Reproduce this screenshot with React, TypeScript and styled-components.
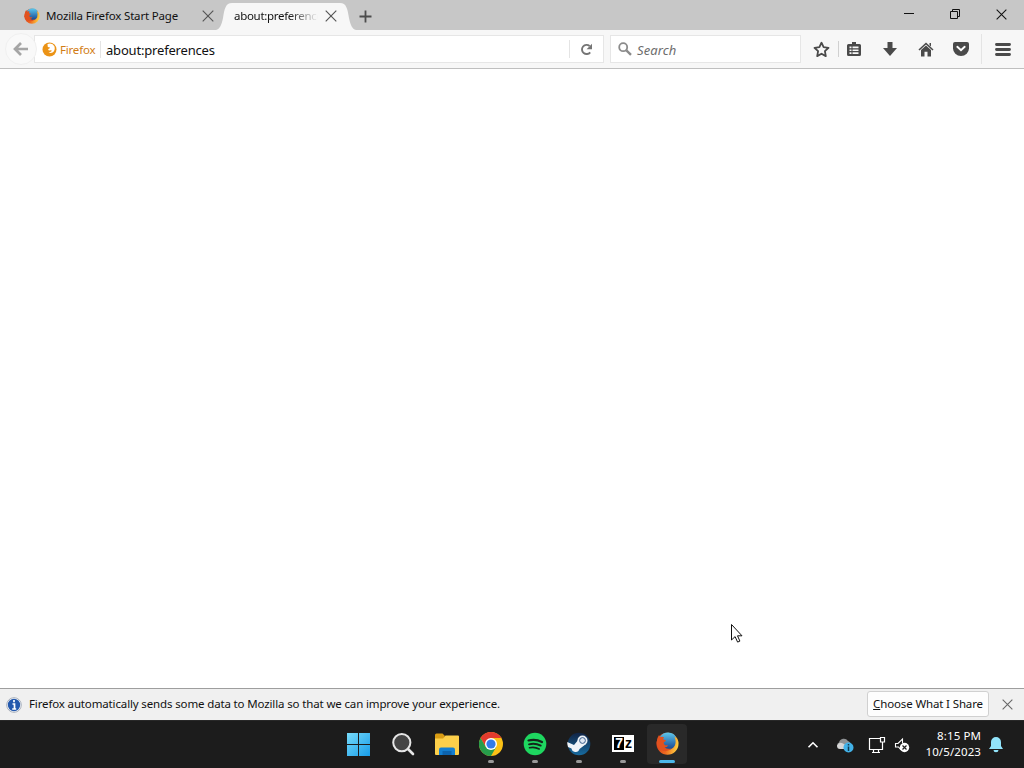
import React from "react";
import styled, { createGlobalStyle } from "styled-components";

const App = () => {
	return (
		<Desktop>
			<GlobalStyle />
			<TitleBar>
				<InactiveTab>
					<FirefoxIcon size={16} />
					<TabTitle>Mozilla Firefox Start Page</TabTitle>
					<CrossIcon size={12} color="#555" />
				</InactiveTab>
				<ActiveTab>
					<TabEdge />
					<ActiveTabBody>
						<FadedTitle>about:preferences</FadedTitle>
						<CrossIcon size={12} color="#555" />
					</ActiveTabBody>
					<TabEdge flipped />
				</ActiveTab>
				<NewTab>
					<svg width="13" height="13" viewBox="0 0 13 13">
						<path d="M6.5 .5v12M.5 6.5h12" stroke="#4c4c4c" strokeWidth="1.8" />
					</svg>
				</NewTab>
				<WindowControls>
					<WindowButton>
						<svg width="10" height="10" viewBox="0 0 10 10">
							<path d="M0 4.5h10" stroke="#111" />
						</svg>
					</WindowButton>
					<WindowButton>
						<svg width="10" height="10" viewBox="0 0 10 10" fill="none" stroke="#111">
							<path d="M.5 2.5h7v7h-7zM2.5 2.5v-2h7v7h-2" />
						</svg>
					</WindowButton>
					<WindowButton>
						<CrossIcon size={11} color="#111" />
					</WindowButton>
				</WindowControls>
			</TitleBar>

			<NavBar>
				<BackButton>
					<svg width="16" height="14" viewBox="0 0 16 14">
						<path d="M8 1 2 7l6 6M2.5 7H15" fill="none" stroke="#a5a5a5" strokeWidth="2.7" />
					</svg>
				</BackButton>
				<UrlBar>
					<Identity>
						<IdentityIcon />
						<IdentityLabel>Firefox</IdentityLabel>
					</Identity>
					<UrlText>about:preferences</UrlText>
					<Reload>
						<svg width="13" height="13" viewBox="0 0 13 13">
							<path d="M10.2 9.3A4.6 4.6 0 1 1 9.6 3" fill="none" stroke="#757575" strokeWidth="1.9" />
							<path d="M12 .7v5.5H6.6z" fill="#757575" />
						</svg>
					</Reload>
				</UrlBar>
				<SearchBox>
					<svg width="14" height="14" viewBox="0 0 14 14" fill="none" stroke="#8b8b8b">
						<circle cx="5.2" cy="5.2" r="4" strokeWidth="1.8" />
						<path d="m8.4 8.4 4.6 4.4" strokeWidth="2.4" />
					</svg>
					<Placeholder>Search</Placeholder>
				</SearchBox>
				<ToolButton $width={33}>
					<svg width="17" height="17" viewBox="0 0 17 17">
						<path
							d="m8.5 1.7 2.1 4.5 4.9.6-3.6 3.4.9 4.9-4.3-2.4-4.3 2.4.9-4.9-3.6-3.4 4.9-.6z"
							fill="none"
							stroke="#4a4a4a"
							strokeWidth="1.8"
							strokeLinejoin="round"
						/>
					</svg>
				</ToolButton>
				<ToolDivider $height={16} />
				<ToolButton $width={29}>
					<svg width="14" height="16" viewBox="0 0 14 16">
						<path d="M5 1h4v2h3.500Q14 3 14 4.500v9q0 1.500-1.500 1.500h-11Q0 15 0 13.500v-9Q0 3 1.500 3H5z" fill="#4a4a4a" />
						<path
							d="M2.500 5.500h2v1.700h-2zM5.500 5.500h6v1.700h-6zM2.500 8.400h2v1.700h-2zM5.500 8.400h6v1.700h-6zM2.500 11.300h2V13h-2zM5.500 11.300h6V13h-6z"
							fill="#f7f7f7"
						/>
					</svg>
				</ToolButton>
				<ToolButton $width={43}>
					<svg width="14" height="14" viewBox="0 0 14 14">
						<path d="M4.500 0h5v6H14l-7 8-7-8h4.500z" fill="#4a4a4a" />
					</svg>
				</ToolButton>
				<ToolButton $width={29}>
					<svg width="16" height="15" viewBox="0 0 16 15">
						<path d="M1 8 8 1.500 15 8" fill="none" stroke="#4a4a4a" strokeWidth="1.600" />
						<path d="M11.500 1H13v3.500l-1.500-1.300zM3 8l5-4.600L13 8v6.500H9.500V9.700h-3v4.800H3z" fill="#4a4a4a" />
					</svg>
				</ToolButton>
				<ToolButton $width={41}>
					<svg width="16" height="14" viewBox="0 0 16 14">
						<path d="M2 0h12q2 0 2 2v4.200a8 7.800 0 0 1-16 0V2q0-2 2-2z" fill="#4a4a4a" />
						<path d="m4.300 4.800 3.700 3.500 3.700-3.500" fill="none" stroke="#fff" strokeWidth="1.900" strokeLinecap="round" />
					</svg>
				</ToolButton>
				<ToolDivider $height={30} $faint />
				<ToolButton $width={42}>
					<svg width="16" height="13" viewBox="0 0 16 13">
						<path d="M1.500 1.500h13M1.500 6.500h13M1.500 11.500h13" stroke="#4a4a4a" strokeWidth="2.900" strokeLinecap="round" />
					</svg>
				</ToolButton>
			</NavBar>

			<Page />

			<Notification>
				<svg width="16" height="16" viewBox="0 0 16 16">
					<circle cx="8" cy="8" r="7.300" fill="#fff" stroke="#a5adb9" />
					<circle cx="8" cy="8" r="6.200" fill="#2459ad" />
					<path d="M8 3v2.200M6.500 7h2v4.600M6.200 12h4" stroke="#fff" strokeWidth="1.700" fill="none" />
				</svg>
				<NotificationText>
					Firefox automatically sends some data to Mozilla so that we can improve your experience.
				</NotificationText>
				<ShareButton>
					<span>
						<u>C</u>hoose What I Share
					</span>
				</ShareButton>
				<CrossIcon size={11} color="#666" />
			</Notification>

			<Taskbar>
				<Apps>
					<TaskSlot>
						<WindowsIcon />
					</TaskSlot>
					<TaskSlot>
						<svg width="24" height="24" viewBox="0 0 24 24">
							<circle cx="10.800" cy="10.600" r="8.600" fill="#444" stroke="#e5e5e5" strokeWidth="2" />
							<path d="m17 17 5 5" stroke="#e5e5e5" strokeWidth="2.600" strokeLinecap="round" />
						</svg>
					</TaskSlot>
					<TaskSlot>
						<FolderIcon />
					</TaskSlot>
					<TaskSlot $running>
						<ChromeIcon />
					</TaskSlot>
					<TaskSlot $running>
						<svg width="24" height="24" viewBox="0 0 24 24">
							<circle cx="12" cy="12" r="11.300" fill="#1ed760" />
							<g fill="none" stroke="#14251a" strokeLinecap="round">
								<path d="M5.500 8.500q7-2 13.500 1.500" strokeWidth="2.200" />
								<path d="M6 12.300q6-1.700 11.700 1.300" strokeWidth="1.900" />
								<path d="M6.500 15.800q5-1.300 9.700 1.200" strokeWidth="1.600" />
							</g>
						</svg>
					</TaskSlot>
					<TaskSlot $running>
						<SteamIcon />
					</TaskSlot>
					<TaskSlot $running>
						<SevenZip>
							<b>7</b>
							<span>z</span>
						</SevenZip>
					</TaskSlot>
					<TaskSlot $running $active>
						<FirefoxIcon size={23} />
					</TaskSlot>
				</Apps>
				<Tray>
					<TraySlot $width={30}>
						<svg width="12" height="8" viewBox="0 0 12 8">
							<path d="m1.500 6.300 4.500-4.500 4.500 4.500" fill="none" stroke="#fff" strokeWidth="1.600" />
						</svg>
					</TraySlot>
					<TraySlot $width={34}>
						<svg width="18" height="16" viewBox="0 0 18 16">
							<path d="M3 11a3 3 0 0 1 0-5.500A5 5 0 0 1 12 4q3 1 2.500 5l-5 3z" fill="#8f9294" />
							<path d="M1 8.500q2-4 6-2l4 2.500-1 3H4Q1 12 1 8.500z" fill="#d5d5d5" />
							<circle cx="12.500" cy="10.500" r="5" fill="#42b2e8" />
							<path d="M12.500 7v1.500M12.500 9.600V14" stroke="#143c50" strokeWidth="1.500" />
						</svg>
					</TraySlot>
					<TraySlot $width={30}>
						<svg width="18" height="18" viewBox="0 0 18 18" fill="none" stroke="#fff" strokeWidth="1.200">
							<path d="M12 2.500H1.500v11h13V8M5.500 13.500v3M10.500 13.500v3M4 16.500h8M12.500 1.500h4v4.500h-4zM14.500 6v3" />
						</svg>
					</TraySlot>
					<TraySlot $width={20}>
						<svg width="16" height="16" viewBox="0 0 16 16">
							<path d="M7 13 4.500 10H1.500V6.500h2.500L8.500 2v4" fill="none" stroke="#fff" strokeWidth="1.100" />
							<circle cx="10.500" cy="10.500" r="4.700" fill="#fff" />
							<path d="m8.500 8.500 4 4m0-4-4 4" stroke="#222" strokeWidth="1.200" />
						</svg>
					</TraySlot>
					<Clock>
						<span>8:15 PM</span>
						<span>10/5/2023</span>
					</Clock>
					<TraySlot $width={30}>
						<svg width="14" height="16" viewBox="0 0 14 16">
							<path d="M7 0a5 5 0 0 1 5 5v4l2 3H0l2-3V5a5 5 0 0 1 5-5zM4.500 13h5a2.500 2.300 0 0 1-5 0z" fill="#92e4fb" />
						</svg>
					</TraySlot>
				</Tray>
			</Taskbar>

			<Cursor width="14" height="21" viewBox="0 0 14 21">
				<path d="M1.500 1.500v15.500l3.600-3.400 2.500 5.500 2.300-1-2.400-5.300H12z" fill="#fff" stroke="#111" />
			</Cursor>
		</Desktop>
	);
};

export default App;

interface IconProps {
	size: number;
	color?: string;
}

const CrossIcon = ({ size, color }: IconProps) => (
	<svg width={size} height={size} viewBox="0 0 12 12">
		<path d="m.7.7 10.600 10.600m0-10.600L.7 11.300" stroke={color} strokeWidth="1.150" />
	</svg>
);

const TabEdge = ({ flipped }: { flipped?: boolean }) => (
	<svg width="16" height="27" viewBox="0 0 16 27" transform={flipped ? "scale(-1 1)" : undefined}>
		<path d="M0 27C4 26 5.500 22 7 15 8.500 6 9.500 0 16 0v27z" fill="#f7f7f7" />
	</svg>
);

const FirefoxIcon = ({ size }: IconProps) => (
	<svg width={size} height={size} viewBox="0 0 24 24">
		<defs>
			<linearGradient id="ff-globe" x1="0" y1="0" x2="0" y2="1">
				<stop offset="0" stopColor="#5cc8ee" />
				<stop offset="1" stopColor="#16418d" />
			</linearGradient>
			<linearGradient id="ff-tail" x1="0" y1=".3" x2="1" y2=".5">
				<stop offset="0" stopColor="#d83c1c" />
				<stop offset=".5" stopColor="#ee6a20" />
				<stop offset="1" stopColor="#ffd040" />
			</linearGradient>
		</defs>
		<circle cx="12" cy="12.300" r="11.500" fill="url(#ff-tail)" />
		<path d="M4 5Q7.500 .3 13 .5q5.500 .3 8 5-1 .2-1.800-.6 2.300 5 .6 9-2.300 4.600-7.500 4.600-6 0-8-6z" fill="url(#ff-globe)" />
		<path
			d="M3 3.500q1 .3 1.700 1.700 2-.7 3.700.2-1.200 1.200-.7 2.500l2.700.8q-.3 1.300-2.300 2.100-.4 2.300 1.500 3 1.800-.3 3.200.4-1.300 2.100-3.800 2.100 3.500 2.200 7.300.6-4 4.500-10 2.500Q.5 16.500.7 11 1 6 3 3.500z"
			fill="#e2521f"
		/>
	</svg>
);

const IdentityIcon = () => (
	<svg width="15" height="15" viewBox="0 0 15 15">
		<circle cx="7.500" cy="7.500" r="7" fill="#eb9316" />
		<path d="M5.500 2q5-1.500 7 2.500 1 4-2 6-2 1-4-.3 2.500.2 3.500-1.400Q8.600 8 7.600 8.600 6 8.500 6.200 7q1.600-.3 1.800-1.500L5.800 5z" fill="#fff" />
	</svg>
);

const WindowsIcon = () => (
	<svg width="24" height="24" viewBox="0 0 24 24">
		<defs>
			<linearGradient id="win" x1="0" y1="0" x2="24" y2="24" gradientUnits="userSpaceOnUse">
				<stop offset="0" stopColor="#79dcfa" />
				<stop offset="1" stopColor="#159be9" />
			</linearGradient>
		</defs>
		<path d="M0 1h11v11H0zM12 1h11v11H12zM0 13h11v11H0zM12 13h11v11H12z" fill="url(#win)" />
	</svg>
);

const FolderIcon = () => (
	<svg width="26" height="24" viewBox="0 0 26 24">
		<path d="M1 3q0-1.500 1.500-1.500h6L11 4l-2 4H1z" fill="#d99c13" />
		<path d="M1 6.500h8L11.500 3.500H24q1 0 1 1V22q0 1-1 1H2q-1 0-1-1z" fill="#fccf4a" />
		<path d="M5 23v-5.500q0-2 2-2h12q2 0 2 2V23z" fill="#137ed0" />
		<path d="M8.500 19h9v4h-9z" fill="#0c63ae" />
	</svg>
);

const ChromeIcon = () => (
	<svg width="24" height="24" viewBox="0 0 24 24">
		<circle cx="12" cy="12" r="12" fill="#fbc116" />
		<path d="M1.600 6A12 12 0 0 1 22.400 6H12L6.800 15z" fill="#e33b2e" />
		<path d="M1.600 6a12 12 0 0 0 10.400 18l5.200-9H6.800z" fill="#269c4b" />
		<circle cx="12" cy="12" r="6" fill="#fff" />
		<circle cx="12" cy="12" r="4.600" fill="#327bea" />
	</svg>
);

const SteamIcon = () => (
	<svg width="24" height="24" viewBox="0 0 24 24">
		<defs>
			<linearGradient id="steam" x1="0" y1="0" x2="0" y2="1">
				<stop offset="0" stopColor="#112344" />
				<stop offset="1" stopColor="#176b9f" />
			</linearGradient>
		</defs>
		<circle cx="12" cy="12" r="11.300" fill="url(#steam)" />
		<path d="m.3 10 6.700 3 5-6 7 5-6.500 5q-1 3.500-4.500 3-3-.5-3.500-3.500L1 14.900q-1-2.400-.7-4.900z" fill="#eef3f8" />
		<circle cx="15.500" cy="8.500" r="5" fill="#eef3f8" />
		<circle cx="15.500" cy="8.500" r="2.900" fill="#dfe9f5" stroke="#3b5f8c" strokeWidth="1" />
	</svg>
);

const GlobalStyle = createGlobalStyle`
	body {
		margin: 0;
		overflow: hidden;
	}
	* {
		box-sizing: border-box;
	}
	svg {
		display: block;
		flex-shrink: 0;
	}
`;

const Desktop = styled.div`
	position: relative;
	display: flex;
	flex-direction: column;
	width: 1024px;
	height: 768px;
	background: #fff;
	color: #111;
	font-family: "Noto Sans", "Open Sans", sans-serif;
	font-size: 11.5px;
	letter-spacing: -0.14px;
	white-space: nowrap;
`;

const TitleBar = styled.div`
	display: flex;
	height: 30px;
	background: #c7c7c7;
`;

const InactiveTab = styled.div`
	display: flex;
	align-items: center;
	width: 216px;
	padding: 2px 0 0 24px;
`;

const TabTitle = styled.div`
	width: 156px;
	margin-left: 6px;
	padding-bottom: 2px;
	letter-spacing: -0.17px;
`;

const ActiveTab = styled.div`
	display: flex;
	height: 27px;
	margin-top: 3px;
`;

const ActiveTabBody = styled.div`
	display: flex;
	align-items: center;
	justify-content: space-between;
	width: 108px;
	padding: 0 3px 1px 2px;
	background: #f7f7f7;
`;

const FadedTitle = styled.div`
	width: 84px;
	padding-bottom: 1px;
	overflow: hidden;
	letter-spacing: -0.3px;
	mask-image: linear-gradient(to right, #000 65%, transparent);
`;

const NewTab = styled.div`
	display: flex;
	align-items: center;
	padding: 2px 0 0 3px;
`;

const WindowControls = styled.div`
	display: flex;
	margin-left: auto;
`;

const WindowButton = styled.div`
	display: flex;
	align-items: center;
	justify-content: center;
	width: 46px;
	padding-bottom: 2px;
`;

const NavBar = styled.div`
	display: flex;
	align-items: center;
	height: 39px;
	background: #f7f7f7;
	border-bottom: 1px solid #bfbfbf;
`;

const BackButton = styled.div`
	z-index: 1;
	display: flex;
	flex-shrink: 0;
	align-items: center;
	justify-content: center;
	width: 32px;
	height: 32px;
	margin: 0 -3px 0 5px;
	border: 1px solid #f0f0f0;
	border-radius: 50%;
	background: #f9f9f9;
`;

const UrlBar = styled.div`
	display: flex;
	flex-shrink: 0;
	align-items: center;
	width: 570px;
	height: 28px;
	padding-left: 7px;
	border: 1px solid #e6e6e6;
	background: #fff;
`;

const Identity = styled.div`
	display: flex;
	align-items: center;
	gap: 3px;
	width: 59px;
	height: 17px;
	border-right: 1px solid #e4e4e4;
`;

const IdentityLabel = styled.span`
	color: #d27d14;
	letter-spacing: -0.2px;
`;

const UrlText = styled.div`
	flex: 1;
	padding: 2px 0 0 5px;
	font-size: 13px;
	letter-spacing: -0.18px;
`;

const Reload = styled.div`
	display: flex;
	align-items: center;
	justify-content: center;
	width: 34px;
	height: 18px;
	border-left: 1px solid #e4e4e4;
`;

const SearchBox = styled.div`
	display: flex;
	flex-shrink: 0;
	align-items: center;
	gap: 5px;
	width: 191px;
	height: 28px;
	margin: 0 4px 0 6px;
	padding-left: 7px;
	border: 1px solid #e6e6e6;
	background: #fff;
`;

const Placeholder = styled.div`
	padding-top: 2px;
	color: #6d6d6d;
	font-size: 13px;
	font-style: italic;
	letter-spacing: 0.1px;
`;

const ToolButton = styled.div<{ $width: number }>`
	display: flex;
	flex-shrink: 0;
	align-items: center;
	justify-content: center;
	width: ${(props) => props.$width}px;
`;

const ToolDivider = styled.div<{ $height: number; $faint?: boolean }>`
	flex-shrink: 0;
	width: 1px;
	height: ${(props) => props.$height}px;
	background: ${(props) => (props.$faint ? "#e4e4e4" : "#d0d0d0")};
`;

const Page = styled.div`
	flex: 1;
`;

const Notification = styled.div`
	display: flex;
	align-items: center;
	height: 32px;
	padding: 0 11px 0 6px;
	border-top: 1px solid #9e9e9e;
	background: #f0f0f0;
`;

const NotificationText = styled.div`
	flex: 1;
	margin-left: 7px;
	padding-bottom: 2px;
`;

const ShareButton = styled.div`
	display: flex;
	align-items: center;
	justify-content: center;
	width: 122px;
	height: 26px;
	margin: 0 13px 1px 0;
	padding-bottom: 1px;
	border: 1px solid #d0d0d0;
	border-radius: 3px;
	background: #fdfdfd;
`;

const Taskbar = styled.div`
	display: flex;
	height: 48px;
	padding-left: 336px;
	border-top: 1px solid #282828;
	background: #1c1c1c;
	color: #fff;
`;

const Apps = styled.div`
	display: flex;
	align-items: center;
	gap: 4px;
	padding: 0 0 1px 3px;
`;

const TaskSlot = styled.div<{ $running?: boolean; $active?: boolean }>`
	position: relative;
	display: flex;
	align-items: center;
	justify-content: center;
	width: 40px;
	height: 40px;
	padding-bottom: 1px;
	border-radius: 4px;
	background: ${(props) => (props.$active ? "#292929" : "transparent")};

	&::after {
		content: "";
		display: ${(props) => (props.$running ? "block" : "none")};
		position: absolute;
		bottom: 1px;
		width: ${(props) => (props.$active ? 16 : 6)}px;
		height: 3px;
		border-radius: 2px;
		background: ${(props) => (props.$active ? "#4cb8ea" : "#999")};
	}
`;

const SevenZip = styled.div`
	display: flex;
	align-items: flex-end;
	justify-content: center;
	width: 22px;
	height: 17px;
	padding-bottom: 2px;
	background: #fff;
	color: #000;
	font: bold 14px/13px "Liberation Sans", sans-serif;

	b {
		width: 10px;
		margin-right: 1px;
		background: #000;
		color: #fff;
		text-align: center;
	}
`;

const Tray = styled.div`
	display: flex;
	align-items: center;
	margin-left: auto;
	padding-right: 13px;
`;

const TraySlot = styled.div<{ $width: number }>`
	display: flex;
	align-items: center;
	justify-content: center;
	width: ${(props) => props.$width}px;
`;

const Clock = styled.div`
	display: flex;
	flex-direction: column;
	align-items: flex-end;
	width: 69px;
	padding-bottom: 2px;
	letter-spacing: 0.1px;
	line-height: 16px;
`;

const Cursor = styled.svg`
	position: absolute;
	left: 730px;
	top: 623px;
`;
